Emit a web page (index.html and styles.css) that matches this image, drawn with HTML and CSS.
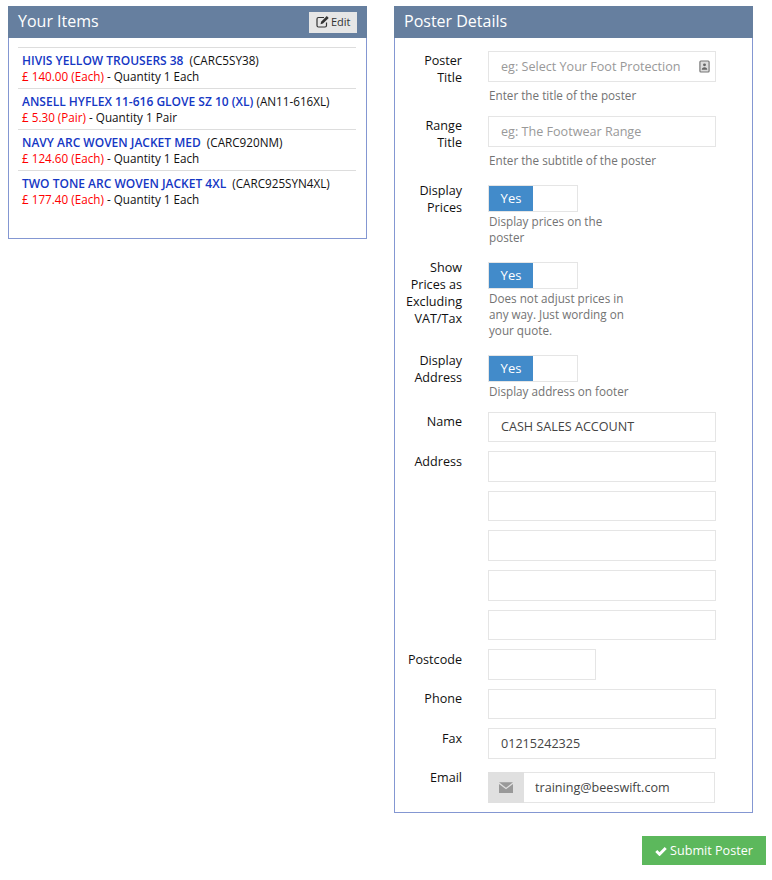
FILE: index.html
```html
<!DOCTYPE html>
<html lang="en">
<head>
<meta charset="utf-8">
<title>Poster Details</title>
<link rel="stylesheet" href="styles.css">
</head>
<body>
<div class="page">
  <div class="columns">
    <section class="panel items-panel">
      <header class="panel-head">
        <h2>Your Items</h2>
        <button class="edit-btn" type="button">
          <svg class="edit-icon" viewBox="0 0 14 13" aria-hidden="true"><path d="M10.500 7.500v3a1.500 1.500 0 0 1-1.500 1.500H2.500A1.500 1.500 0 0 1 1 10.500V4a1.500 1.500 0 0 1 1.500-1.500H8" fill="none" stroke="#333" stroke-width="1.200"/><path d="M4.500 9.200l.6-2.500L10.800 1l1.900 1.900L7 8.600z" fill="#333"/></svg>
          Edit
        </button>
      </header>
      <div class="items-body">
        <div class="item">
          <div><a class="item-name">HIVIS YELLOW TROUSERS 38</a>&nbsp; (CARC5SY38)</div>
          <div class="item-line"><span class="price">£ 140.00 (Each)</span> - Quantity 1 Each</div>
        </div>
        <div class="item">
          <div><a class="item-name">ANSELL HYFLEX 11-616 GLOVE SZ 10 (XL)</a> (AN11-616XL)</div>
          <div class="item-line"><span class="price">£ 5.30 (Pair)</span> - Quantity 1 Pair</div>
        </div>
        <div class="item">
          <div><a class="item-name">NAVY ARC WOVEN JACKET MED</a>&nbsp; (CARC920NM)</div>
          <div class="item-line"><span class="price">£ 124.60 (Each)</span> - Quantity 1 Each</div>
        </div>
        <div class="item">
          <div><a class="item-name">TWO TONE ARC WOVEN JACKET 4XL</a>&nbsp; (CARC925SYN4XL)</div>
          <div class="item-line"><span class="price">£ 177.40 (Each)</span> - Quantity 1 Each</div>
        </div>
      </div>
    </section>

    <section class="panel details-panel">
      <header class="panel-head"><h2>Poster Details</h2></header>
      <form class="form-body">
        <div class="row row-help">
          <label>Poster Title</label>
          <div class="control">
            <div class="input-wrap">
              <input class="field field-hint" type="text" placeholder="eg: Select Your Foot Protection">
              <svg class="card-icon" viewBox="0 0 12 14" aria-hidden="true"><rect x="1" y="1" width="10" height="12" rx="1" fill="#ddd" stroke="#777" stroke-width="1.300"/><circle cx="6" cy="5.200" r="1.600" fill="#666"/><path d="M3 10.500c0-1.800 1-2.800 3-2.800s3 1 3 2.800z" fill="#666"/></svg>
            </div>
            <p class="help">Enter the title of the poster</p>
          </div>
        </div>
        <div class="row row-help row-help-last">
          <label>Range Title</label>
          <div class="control">
            <input class="field field-hint" type="text" placeholder="eg: The Footwear Range">
            <p class="help">Enter the subtitle of the poster</p>
          </div>
        </div>
        <div class="row row-toggle">
          <label>Display Prices</label>
          <div class="control">
            <div class="toggle"><span class="toggle-on">Yes</span></div>
            <p class="help help-narrow">Display prices on the poster</p>
          </div>
        </div>
        <div class="row row-toggle">
          <label>Show Prices as Excluding VAT/Tax</label>
          <div class="control">
            <div class="toggle"><span class="toggle-on">Yes</span></div>
            <p class="help help-narrow">Does not adjust prices in any way. Just wording on your quote.</p>
          </div>
        </div>
        <div class="row row-toggle row-toggle-last">
          <label>Display Address</label>
          <div class="control">
            <div class="toggle"><span class="toggle-on">Yes</span></div>
            <p class="help">Display address on footer</p>
          </div>
        </div>
        <div class="row"><label>Name</label><div class="control"><input class="field" type="text" value="CASH SALES ACCOUNT"></div></div>
        <div class="row"><label>Address</label><div class="control"><input class="field" type="text"></div></div>
        <div class="row"><label></label><div class="control"><input class="field" type="text"></div></div>
        <div class="row"><label></label><div class="control"><input class="field" type="text"></div></div>
        <div class="row"><label></label><div class="control"><input class="field" type="text"></div></div>
        <div class="row"><label></label><div class="control"><input class="field" type="text"></div></div>
        <div class="row"><label>Postcode</label><div class="control"><input class="field field-short" type="text"></div></div>
        <div class="row"><label>Phone</label><div class="control"><input class="field" type="text"></div></div>
        <div class="row"><label>Fax</label><div class="control"><input class="field" type="text" value="01215242325"></div></div>
        <div class="row row-email">
          <label>Email</label>
          <div class="control">
            <div class="input-group">
              <span class="addon">
                <svg class="mail-icon" viewBox="0 0 14 11" aria-hidden="true"><path d="M0 0h14L7 5.500z" fill="#999" transform="translate(0 .3)"/><path d="M0 2l7 5.200L14 2v9H0z" fill="#999"/></svg>
              </span>
              <input class="field field-group" type="text" value="training@beeswift.com">
            </div>
          </div>
        </div>
      </form>
    </section>
  </div>
  <div class="actions">
    <button class="submit-btn" type="button">
      <svg class="check-icon" viewBox="0 0 14 11" aria-hidden="true"><path d="M1.500 5.500l3.800 3.800L12.500 2" fill="none" stroke="#fff" stroke-width="3.400"/></svg>
      Submit Poster
    </button>
  </div>
</div>
</body>
</html>
```

FILE: styles.css
```css
* { box-sizing: border-box; }
html, body { margin: 0; padding: 0; background: #fff; }
body {
  font-family: "Open Sans", "Liberation Sans", sans-serif;
  font-size: 11.700px;
  line-height: 17px;
  color: #111;
}
.page { padding: 6px 6px 0 8px; }
.columns { display: flex; align-items: flex-start; gap: 27px; }
.panel { width: 359px; border: 1px solid #8497d2; border-top: 0; }
.panel-head {
  height: 32px;
  margin: 0 -1px;
  padding: 0 10px;
  background: #667f9f;
  display: flex;
  align-items: center;
  justify-content: space-between;
}
.panel-head h2 { margin: 0 0 2px; font-size: 16px; font-weight: 400; color: #fff; line-height: 30px; }
.edit-btn {
  display: flex;
  align-items: center;
  gap: 1px;
  height: 21px;
  width: 48px;
  padding: 0 0 2px 7px;
  border: 0;
  background: #e6e6e6;
  color: #333;
  font: inherit;
  font-size: 11px;
}
.edit-icon { width: 14px; height: 13px; }
.items-body { height: 200px; padding: 9px 10px 0 9px; }
.item { border-top: 1px solid #ddd; padding: 4px 4px 3px; height: 41.100px; white-space: nowrap; line-height: 16px; }
.item-line { margin-top: -1px; }
.item-name { color: #1537c4; font-weight: 600; font-size: 12px; }
.price { color: #f00; }
.form-body { padding: 13px 0 9px 7px; }
.row { display: grid; grid-template-columns: 60px 228px; column-gap: 26px; margin-bottom: 9px; }
.row label { text-align: right; font-size: 12.600px; padding-top: 1.400px; }
.field {
  display: block;
  width: 100%;
  height: 30.600px;
  border: 1px solid #e5e5e5;
  background: #fff;
  padding: 0 12px 1px;
  font: inherit;
  font-size: 12.600px;
  color: #444;
  border-radius: 0;
  outline: 0;
}
.field-hint { padding-bottom: 0; }
.field::placeholder { color: #999; opacity: 1; }
.field-short { width: 108px; }
.input-wrap { position: relative; }
.card-icon { position: absolute; right: 6px; top: 9px; width: 11px; height: 13px; }
.help { margin: 5px 0 0; padding-left: 1px; line-height: 16px; color: #737373; }
.row-toggle .help { margin-top: 1px; }
.help-narrow { max-width: 145px; }
.row-help { margin-bottom: 0; height: 65px; }
.row-help-last { height: 69px; }
.row-toggle { margin-bottom: 0; padding-bottom: 17px; }
.row-toggle-last { padding-bottom: 12.700px; }
.row-toggle label { padding-top: 0; margin-top: -3px; }
.toggle { width: 90px; height: 27px; border: 1px solid #e5e5e5; background: #fff; }
.toggle-on {
  display: block;
  width: 44px;
  height: 25px;
  background: #428bca;
  color: #fff;
  text-align: center;
  font-size: 13px;
  line-height: 25px;
}
.row-email { margin-top: 13px; margin-bottom: 0; }
.row-email label { padding-top: 0; margin-top: -3px; }
.input-group { display: flex; width: 227px; }
.addon { width: 36px; height: 31px; background: #e0e0e0; display: flex; align-items: center; justify-content: center; }
.mail-icon { width: 14px; height: 11px; }
.field-group { width: auto; flex: 1; height: 31px; padding: 0 11px 1px; border-left: 0; min-width: 0; }
.actions { display: flex; justify-content: flex-end; padding-top: 23px; }
.submit-btn {
  width: 124px;
  height: 29px;
  border: 0;
  background: #5cb85c;
  color: #fff;
  font: inherit;
  font-size: 12.600px;
  display: flex;
  align-items: center;
  justify-content: center;
  gap: 3px;
  padding: 0;
}
.check-icon { width: 12px; height: 10px; }
```
